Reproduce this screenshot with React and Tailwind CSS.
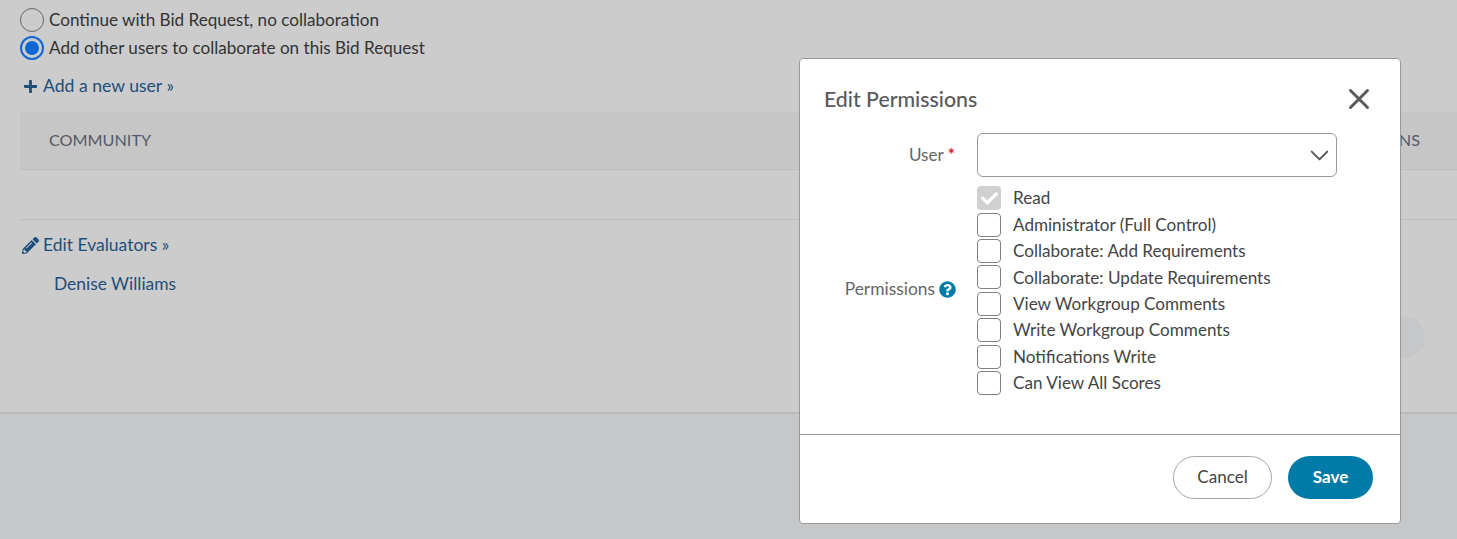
import { X, ChevronDown } from 'lucide-react';
import { FaCheck, FaPlus, FaPencilAlt, FaQuestionCircle } from 'react-icons/fa';

const permissions = [
  'Administrator (Full Control)',
  'Collaborate: Add Requirements',
  'Collaborate: Update Requirements',
  'View Workgroup Comments',
  'Write Workgroup Comments',
  'Notifications Write',
  'Can View All Scores',
];

const font = { fontFamily: 'Lato, sans-serif' };

const Radio = ({ checked, label }) => (
  <div className="flex h-[28px] items-center gap-[5px]">
    {checked ? (
      <div className="flex h-[24px] w-[24px] items-center justify-center rounded-full border-2 border-[#0f66d5]">
        <div className="h-[14px] w-[14px] rounded-full bg-[#0f66d5]" />
      </div>
    ) : (
      <div className="h-[24px] w-[24px] rounded-full border border-[#666666]" />
    )}
    <span className="text-[17.1px] text-[#333333]">{label}</span>
  </div>
);

const PermissionBox = ({ label }) => (
  <div className="flex h-[26.4px] items-center gap-[12px]">
    <div className="h-[24px] w-[24px] rounded-[4px] border border-[#808080] bg-white" />
    <span className="text-[17.1px] text-[#444444]">{label}</span>
  </div>
);

const EditPermissionsModal = () => (
  <div className="absolute left-[799px] top-[58px] flex h-[466px] w-[602px] flex-col rounded-[4px] border border-[#999999] bg-white">
    <div className="flex h-[74px] items-center justify-between pl-[24px] pr-[24px] pt-[7px]">
      <h2 className="text-[21.3px] font-medium text-[#595959]">Edit Permissions</h2>
      <X className="mb-[2px] h-[34px] w-[34px] text-[#595959]" strokeWidth={2.1} />
    </div>

    <div className="flex items-center">
      <label className="w-[177px] pr-[22px] text-right text-[17.1px] text-[#666666]">
        User <span className="font-bold text-[#e0202c]">*</span>
      </label>
      <div className="flex h-[44px] w-[360px] items-center justify-end rounded-[6px] border border-[#999999] pr-[1px]">
        <ChevronDown className="h-[31px] w-[31px] text-[#555555]" strokeWidth={1.5} />
      </div>
    </div>

    <div className="mt-[8px] flex flex-1 items-start">
      <div className="flex h-[208px] w-[177px] items-center justify-end gap-[4px] pr-[21px]">
        <span className="text-[17.4px] text-[#666666]">Permissions</span>
        <FaQuestionCircle className="h-[17px] w-[17px] text-[#007ba7]" />
      </div>
      <div className="flex flex-col">
        <div className="flex h-[26.4px] items-center gap-[12px]">
          <div className="flex h-[24px] w-[24px] items-center justify-center rounded-[4px] bg-[#d0d0d0]">
            <FaCheck className="h-[17px] w-[17px] text-white" />
          </div>
          <span className="text-[17.1px] text-[#444444]">Read</span>
        </div>
        {permissions.map((label) => (
          <PermissionBox key={label} label={label} />
        ))}
      </div>
    </div>

    <div className="flex h-[89px] items-center justify-end gap-[16px] border-t border-[#999999] pb-[4px] pr-[27px]">
      <button className="h-[43px] w-[99px] rounded-full border border-[#a6a6a6] text-[17.1px] text-[#444444]">
        Cancel
      </button>
      <button className="h-[43px] w-[85px] rounded-full bg-[#007ba7] text-[17.1px] font-bold text-white">
        Save
      </button>
    </div>
  </div>
);

export default function App() {
  return (
    <div className="relative flex h-[539px] w-full flex-col overflow-hidden bg-[#c6c7c9]" style={font}>
      <div className="flex h-[414px] flex-col border-b-2 border-[#b8b8bc] bg-[#cccccc] pl-[20px] pt-[6px]">
        <Radio label="Continue with Bid Request, no collaboration" />
        <Radio checked label="Add other users to collaborate on this Bid Request" />

        <a className="mt-[12px] flex h-[24px] items-center gap-[5px] pl-[3px] text-[17.6px] text-[#1e4f7a]">
          <FaPlus className="h-[15px] w-[15px]" />
          Add a new user »
        </a>

        <div className="mt-[14px] flex h-[58px] items-center justify-between border-b border-[#bdbdbd] bg-[#c6c6c6] pl-[29px] pr-[37px] text-[16.2px] text-[#555a66]">
          <span>COMMUNITY</span>
          <span>PERMISSIONS</span>
        </div>

        <div className="mt-[49px] border-t border-[#bdbdbd] pt-[13px]">
          <a className="flex h-[24px] items-center gap-[4px] pl-[2px] text-[17.5px] text-[#1e4f7a]">
            <FaPencilAlt className="h-[17px] w-[17px]" />
            Edit Evaluators »
          </a>
          <div className="mt-[14px] pl-[34px] text-[17.4px] text-[#1e4f7a]">Denise Williams</div>
        </div>

        <div className="mt-[19px] flex justify-end pr-[32px]">
          <div className="h-[42px] w-[42px] rounded-full bg-[#c6c7c9]" />
        </div>
      </div>

      <EditPermissionsModal />
    </div>
  );
}
